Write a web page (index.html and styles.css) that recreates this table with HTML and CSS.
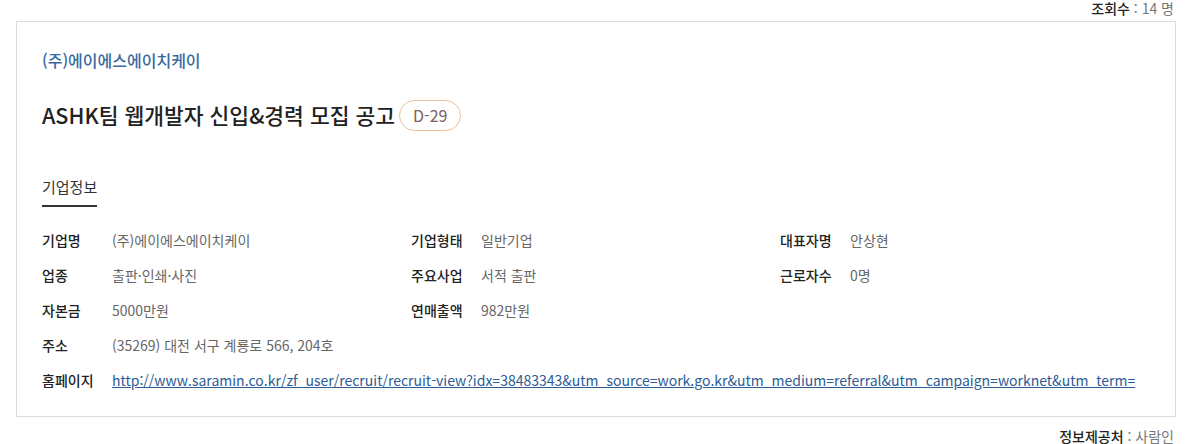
FILE: index.html
```html
<!DOCTYPE html>
<html lang="ko">
<head>
<meta charset="utf-8">
<link rel="stylesheet" href="styles.css">
</head>
<body>
<div class="page">
  <div class="meta-top"><span class="meta-label">조회수</span> : 14 명</div>
  <section class="card">
    <div class="company">(주)에이에스에이치케이</div>
    <h1 class="title">ASHK팀 웹개발자 신입&amp;경력 모집 공고<span class="dday">D-29</span></h1>
    <div class="tabs"><span class="tab active">기업정보</span></div>
    <div class="info">
      <div class="row">
        <div class="cell"><span class="lbl">기업명</span><span class="val">(주)에이에스에이치케이</span></div>
        <div class="cell"><span class="lbl">기업형태</span><span class="val">일반기업</span></div>
        <div class="cell"><span class="lbl">대표자명</span><span class="val">안상현</span></div>
      </div>
      <div class="row">
        <div class="cell"><span class="lbl">업종</span><span class="val">출판·인쇄·사진</span></div>
        <div class="cell"><span class="lbl">주요사업</span><span class="val">서적 출판</span></div>
        <div class="cell"><span class="lbl">근로자수</span><span class="val">0명</span></div>
      </div>
      <div class="row">
        <div class="cell"><span class="lbl">자본금</span><span class="val">5000만원</span></div>
        <div class="cell"><span class="lbl">연매출액</span><span class="val">982만원</span></div>
        <div class="cell"></div>
      </div>
      <div class="row single">
        <div class="cell"><span class="lbl">주소</span><span class="val">(35269) 대전 서구 계룡로 566, 204호</span></div>
      </div>
      <div class="row single">
        <div class="cell"><span class="lbl">홈페이지</span><a class="link" href="#">http://www.saramin.co.kr/zf_user/recruit/recruit-view?idx=38483343&amp;utm_source=work.go.kr&amp;utm_medium=referral&amp;utm_campaign=worknet&amp;utm_term=</a></div>
      </div>
    </div>
  </section>
  <div class="meta-bottom"><span class="meta-label">정보제공처</span> : 사람인</div>
</div>
</body>
</html>
```

FILE: styles.css
```css
* { box-sizing: border-box; }
html, body { margin: 0; padding: 0; background: #fff; }
body {
  font-family: "Noto Sans CJK KR", "Noto Sans", sans-serif;
  color: #333;
}
.page {
  padding: 0 11px 0 16px;
}
.meta-top, .meta-bottom {
  text-align: right;
  font-size: 14px;
  line-height: 16px;
  color: #777;
  padding-right: 2px;
}
.meta-top { padding-top: 0; height: 21px; }
.meta-bottom { padding-top: 11px; }
.meta-label { color: #222; font-weight: 500; }
.card {
  border: 1px solid #dcdcdc;
  padding: 27px 26px 19px 25px;
}
.company {
  font-size: 16px;
  line-height: 22px;
  font-weight: 500;
  color: #3a6a9e;
}
.title {
  margin: 28px 0 0;
  font-size: 21.5px;
  line-height: 32px;
  font-weight: 500;
  color: #222;
  display: flex;
  align-items: center;
}
.dday {
  margin-left: 4px;
  display: inline-flex;
  align-items: center;
  height: 31px;
  padding: 0 13px;
  border: 1px solid #edbf9c;
  border-radius: 16px;
  font-size: 16px;
  font-weight: 400;
  color: #7e6060;
}
.tabs {
  margin-top: 46px;
  display: flex;
}
.tab {
  font-size: 15px;
  line-height: 20px;
  color: #333;
  padding-bottom: 8px;
  border-bottom: 2px solid #333;
}
.info {
  margin-top: 15px;
  display: flex;
  flex-direction: column;
}
.row {
  display: grid;
  grid-template-columns: repeat(3, 1fr);
  height: 35px;
  align-items: center;
}
.row.single { grid-template-columns: 1fr; }
.cell {
  display: flex;
  align-items: center;
  font-size: 14px;
  white-space: nowrap;
}
.lbl {
  width: 70px;
  flex: none;
  font-weight: 500;
  color: #222;
}
.val { color: #666; }
.link {
  color: #2c5c95;
  text-decoration: underline;
}
```
